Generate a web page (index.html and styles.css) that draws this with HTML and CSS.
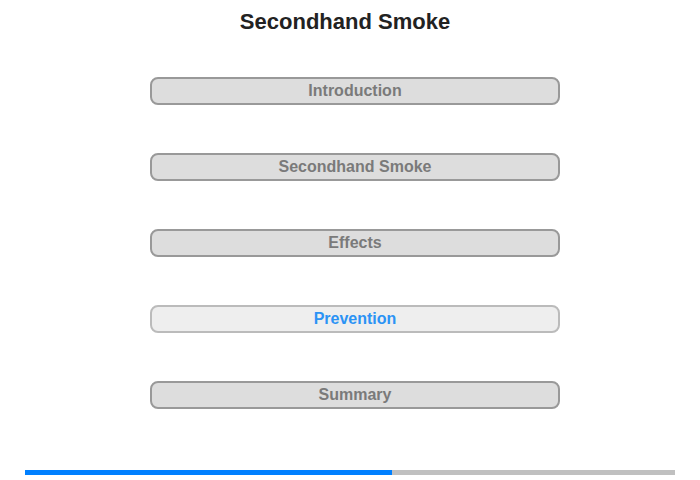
FILE: index.html
```html
<!DOCTYPE html>
<html lang="en">
<head>
  <meta charset="UTF-8">
  <title>Secondhand Smoke</title>
  <link rel="stylesheet" href="styles.css">
</head>
<body>
  <div class="page">
    <h1 class="title">Secondhand Smoke</h1>
    <nav class="menu">
      <button class="menu-btn">Introduction</button>
      <button class="menu-btn">Secondhand Smoke</button>
      <button class="menu-btn">Effects</button>
      <button class="menu-btn active">Prevention</button>
      <button class="menu-btn">Summary</button>
    </nav>
    <div class="progress">
      <div class="progress-fill" style="width: 56.5%"></div>
    </div>
  </div>
</body>
</html>
```

FILE: styles.css
```css
* {
  margin: 0;
  padding: 0;
  box-sizing: border-box;
}

body {
  font-family: 'Liberation Sans', Arial, sans-serif;
  background: #fff;
  width: 700px;
  height: 480px;
  overflow: hidden;
}

.page {
  display: flex;
  flex-direction: column;
}

.title {
  font-size: 22px;
  font-weight: bold;
  color: #222;
  text-align: center;
  padding-top: 9px;
  padding-right: 10px;
  line-height: 25px;
}

.menu {
  display: flex;
  flex-direction: column;
  gap: 48px;
  margin-top: 43px;
  margin-left: 150px;
  width: 410px;
}

.menu-btn {
  height: 28px;
  background: #ddd;
  border: 2px solid #999;
  border-radius: 8px;
  font-family: inherit;
  font-size: 16px;
  font-weight: bold;
  color: #7a7a7a;
  cursor: pointer;
}

.menu-btn.active {
  background: #eee;
  border-color: #bbb;
  color: #2b93f5;
}

.progress {
  margin: 61px 25px 0;
  height: 5px;
  background: #c0c0c0;
}

.progress-fill {
  height: 100%;
  background: #0080ff;
}
```
